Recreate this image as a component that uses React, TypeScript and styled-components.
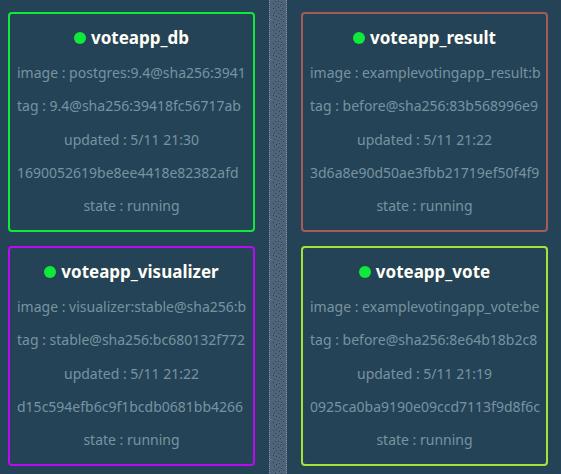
import React from "react";
import styled, { createGlobalStyle } from "styled-components";

const GlobalStyle = createGlobalStyle`
  * { box-sizing: border-box; }
  body {
    margin: 0;
    background: #254356;
    font-family: "Noto Sans", "Open Sans", sans-serif;
  }
`;

const Board = styled.main`
  display: grid;
  grid-template-columns: minmax(0, 1fr) 18px minmax(0, 1fr);
  column-gap: 14px;
  min-height: 100vh;
  padding: 0 13px 0 8px;
`;

const NodeColumn = styled.section`
  display: flex;
  flex-direction: column;
  gap: 14px;
  padding: 12px 0 7px;
`;

const Divider = styled.div`
  display: flex;
  height: 100%;
  min-height: 0;
  contain: size;
`;

const Texture = styled.svg`
  display: block;
  width: 100%;
  height: 100%;
`;

const Card = styled.article<{ $accent: string }>`
  display: flex;
  flex-direction: column;
  justify-content: space-between;
  min-height: 220px;
  padding: 12px 0 14px 7px;
  border: 2px solid ${({ $accent }) => $accent};
  border-radius: 4px;
  overflow: hidden;
  white-space: nowrap;
`;

const Title = styled.h2`
  display: flex;
  align-items: center;
  justify-content: center;
  gap: 5px;
  margin: 0 7px 0 0;
  color: #fffff8;
  font-size: 17px;
  font-weight: 700;
  line-height: 24px;
`;

const StatusDot = styled.span`
  width: 12px;
  height: 12px;
  border-radius: 50%;
  background: #10e83a;
`;

const Detail = styled.p<{ $centered?: boolean }>`
  margin: 0 7px 0 0;
  color: #7793a1;
  font-size: 14px;
  line-height: 20px;
  text-align: ${({ $centered }) => ($centered ? "center" : "left")};
`;

type Service = {
  name: string;
  accent: string;
  image: string;
  tag: string;
  updated: string;
  id: string;
};

const columns: Service[][] = [
  [
    {
      name: "voteapp_db",
      accent: "#10e83a",
      image: "postgres:9.4@sha256:3941",
      tag: "9.4@sha256:39418fc56717ab",
      updated: "5/11 21:30",
      id: "1690052619be8ee4418e82382afd",
    },
    {
      name: "voteapp_visualizer",
      accent: "#b90af4",
      image: "visualizer:stable@sha256:b",
      tag: "stable@sha256:bc680132f772",
      updated: "5/11 21:22",
      id: "d15c594efb6c9f1bcdb0681bb4266",
    },
  ],
  [
    {
      name: "voteapp_result",
      accent: "#a65b5b",
      image: "examplevotingapp_result:b",
      tag: "before@sha256:83b568996e9",
      updated: "5/11 21:22",
      id: "3d6a8e90d50ae3fbb21719ef50f4f9",
    },
    {
      name: "voteapp_vote",
      accent: "#a9e13b",
      image: "examplevotingapp_vote:be",
      tag: "before@sha256:8e64b18b2c8",
      updated: "5/11 21:19",
      id: "0925ca0ba9190e09ccd7113f9d8f6c",
    },
  ],
];

const speckles = [
  [6, 1], [9, 1], [12, 2], [4, 3], [8, 4], [14, 4], [11, 5], [6, 6],
  [9, 7], [13, 8], [4, 8], [7, 10], [11, 10], [14, 11], [5, 12], [9, 13],
  [12, 14], [4, 15], [7, 16], [14, 16], [10, 17], [5, 19], [12, 19],
  [8, 20], [14, 21], [4, 22], [10, 23], [7, 24], [13, 25], [5, 26],
  [9, 27], [12, 28], [4, 30], [7, 29], [14, 30], [10, 31], [6, 33],
  [12, 33], [9, 35], [4, 35], [14, 36], [7, 37], [11, 38],
];

function DotTexture() {
  return (
    <Texture aria-hidden="true" shapeRendering="crispEdges">
      <defs>
        <pattern id="speckle" width="18" height="40" patternUnits="userSpaceOnUse">
          <rect width="18" height="40" fill="#4f6478" />
          {speckles.map(([x, y]) => (
            <rect key={`${x}-${y}`} x={x} y={y} width="1" height="1" fill="#254356" />
          ))}
          {Array.from({ length: 20 }, (_, i) => (
            <path key={i} d={`M0 ${i * 2}h1v1h-1zM17 ${i * 2}h1v1h-1z`} fill="#7a94a2" />
          ))}
          <rect x="1" y="19" width="1" height="1" fill="#7a94a2" />
        </pattern>
      </defs>
      <rect width="18" height="100%" fill="url(#speckle)" />
    </Texture>
  );
}

function ServiceCard({ service }: { service: Service }) {
  return (
    <Card $accent={service.accent}>
      <Title>
        <StatusDot />
        {service.name}
      </Title>
      <Detail>image : {service.image}</Detail>
      <Detail>tag : {service.tag}</Detail>
      <Detail $centered>updated : {service.updated}</Detail>
      <Detail>{service.id}</Detail>
      <Detail $centered>state : running</Detail>
    </Card>
  );
}

function ServiceColumn({ services }: { services: Service[] }) {
  return (
    <NodeColumn>
      {services.map((service) => (
        <ServiceCard key={service.name} service={service} />
      ))}
    </NodeColumn>
  );
}

export default function App() {
  return (
    <>
      <GlobalStyle />
      <Board>
        <ServiceColumn services={columns[0]} />
        <Divider>
          <DotTexture />
        </Divider>
        <ServiceColumn services={columns[1]} />
      </Board>
    </>
  );
}
